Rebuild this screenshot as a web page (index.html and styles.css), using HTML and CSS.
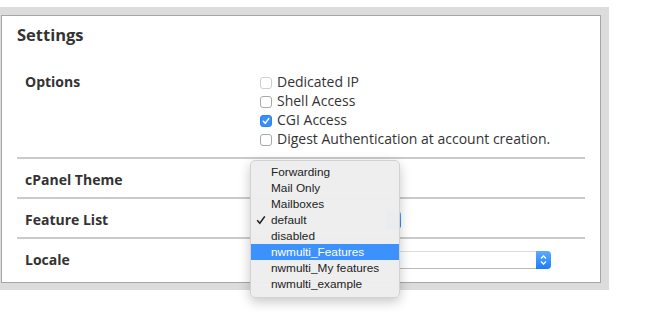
FILE: index.html
```html
<!DOCTYPE html>
<html lang="en">
<head>
    <meta charset="UTF-8">
    <title>Settings</title>
    <link rel="stylesheet" href="styles.css">
</head>
<body>

    <!-- Riquadro grigio esterno -->
    <div class="frame">
        <div class="panel">
            <h2>Settings</h2>

            <div class="rows">
                <!-- Opzioni dell'account -->
                <div class="row options">
                    <div class="label">Options</div>
                    <div class="value">
                        <div class="check"><span class="box disabled"></span>Dedicated IP</div>
                        <div class="check"><span class="box"></span>Shell Access</div>
                        <div class="check"><span class="box checked"><svg viewBox="0 0 12 12" width="12" height="12"><path d="M3.3 6.2 L5.2 8.2 L8.8 3.6" fill="none" stroke="#fff" stroke-width="1.5" stroke-linecap="round" stroke-linejoin="round"/></svg></span>CGI Access</div>
                        <div class="check"><span class="box"></span>Digest Authentication at account creation.</div>
                    </div>
                </div>

                <div class="row">
                    <div class="label">cPanel Theme</div>
                    <div class="value"></div>
                </div>

                <div class="row">
                    <div class="label">Feature List</div>
                    <div class="value">
                        <div class="select short"><span class="arrows"></span></div>
                    </div>
                </div>

                <div class="row last">
                    <div class="label">Locale</div>
                    <div class="value">
                        <div class="select long">
                            <span class="arrows">
                                <svg viewBox="0 0 15 18" width="15" height="18"><path d="M5 7.5 L7.5 5 L10 7.5 M5 10.5 L7.5 13 L10 10.5" fill="none" stroke="#fff" stroke-width="1.3"/></svg>
                            </span>
                        </div>
                    </div>
                </div>

                <!-- Menu aperto della Feature List -->
                <ul class="menu">
                    <li>Forwarding</li>
                    <li>Mail Only</li>
                    <li>Mailboxes</li>
                    <li class="selected"><svg class="tick" viewBox="0 0 10 10" width="10" height="10"><path d="M1.2 5.2 L3.8 8.2 L8.8 1.4" fill="none" stroke="#222" stroke-width="1.6"/></svg>default</li>
                    <li>disabled</li>
                    <li class="active">nwmulti_Features</li>
                    <li>nwmulti_My features</li>
                    <li>nwmulti_example</li>
                </ul>
            </div>
        </div>
    </div>

</body>
</html>
```

FILE: styles.css
```css
html, body {
    min-height: 312px;
}
body {
    margin: 0;
    font-family: 'Open Sans', sans-serif;
    color: #333;
    background-color: #ffffff;
}
.frame {
    width: 600px;
    margin-top: 7px;
    padding: 8px 8px 7px 1px;
    background-color: #dcdcdc;
}
.panel {
    background-color: #ffffff;
    border: 1px solid #a6a6a6;
    padding: 9px 15px 5px 15px;
}
h2 {
    margin: 0 0 17px 0;
    font-size: 16.5px;
    line-height: 20px;
    font-weight: 700;
    color: #333;
}
.rows {
    position: relative;
}
.row {
    display: grid;
    grid-template-columns: 243px 1fr;
    height: 40px;
    padding-top: 11px;
    box-sizing: border-box;
    border-bottom: 2px solid #cacaca;
}
.row.last {
    height: 38px;
    border-bottom: none;
}
.row.options {
    height: auto;
    padding: 10px 0 9px 0;
}
.label {
    padding-left: 8px;
    font-size: 14px;
    font-weight: 700;
    line-height: 20px;
}
.options .label {
    line-height: 19px;
}
.check {
    display: flex;
    align-items: center;
    font-size: 14px;
    line-height: 19px;
    color: #333;
}
.box {
    width: 10px;
    height: 10px;
    margin: 2px 5px 0 0;
    border: 1px solid #a9a9a9;
    border-radius: 3px;
    background-color: #fff;
    position: relative;
    flex: none;
}
.box.disabled {
    border-color: #d0d0d0;
}
.box.checked {
    border-color: #2a83f0;
    background-color: #3790fa;
}
.box svg {
    position: absolute;
    left: -1px;
    top: -1px;
}
.select {
    position: relative;
    height: 18px;
    margin-top: 1px;
    box-sizing: border-box;
    background-color: #fff;
    border-top: 1px solid #dcdcdc;
    border-bottom: 1px solid #b9b9b9;
    border-radius: 4px;
}
.select.short {
    width: 141px;
}
.select.long {
    width: 291px;
}
.arrows {
    position: absolute;
    right: 0;
    top: -1px;
    width: 15px;
    height: 18px;
    border-radius: 0 4px 4px 0;
    background: linear-gradient(#5eabff, #1b7cf9);
}
.arrows svg {
    display: block;
}
.menu {
    position: absolute;
    left: 233px;
    top: 98px;
    width: 150px;
    margin: 0;
    padding: 3px 0 5px 0;
    list-style: none;
    background-color: rgba(238, 238, 238, 0.98);
    border: 1px solid #d2d2d2;
    box-sizing: border-box;
    border-radius: 5px;
    box-shadow: 0 4px 12px rgba(0, 0, 0, 0.22);
    font-family: 'Liberation Sans', sans-serif;
    font-size: 11.8px;
    color: #222;
}
.menu li {
    position: relative;
    height: 16px;
    line-height: 16px;
    padding-left: 20px;
}
.menu li.active {
    background-color: #3d91fd;
    color: #fff;
}
.tick {
    position: absolute;
    left: 5px;
    top: 3px;
}
```
